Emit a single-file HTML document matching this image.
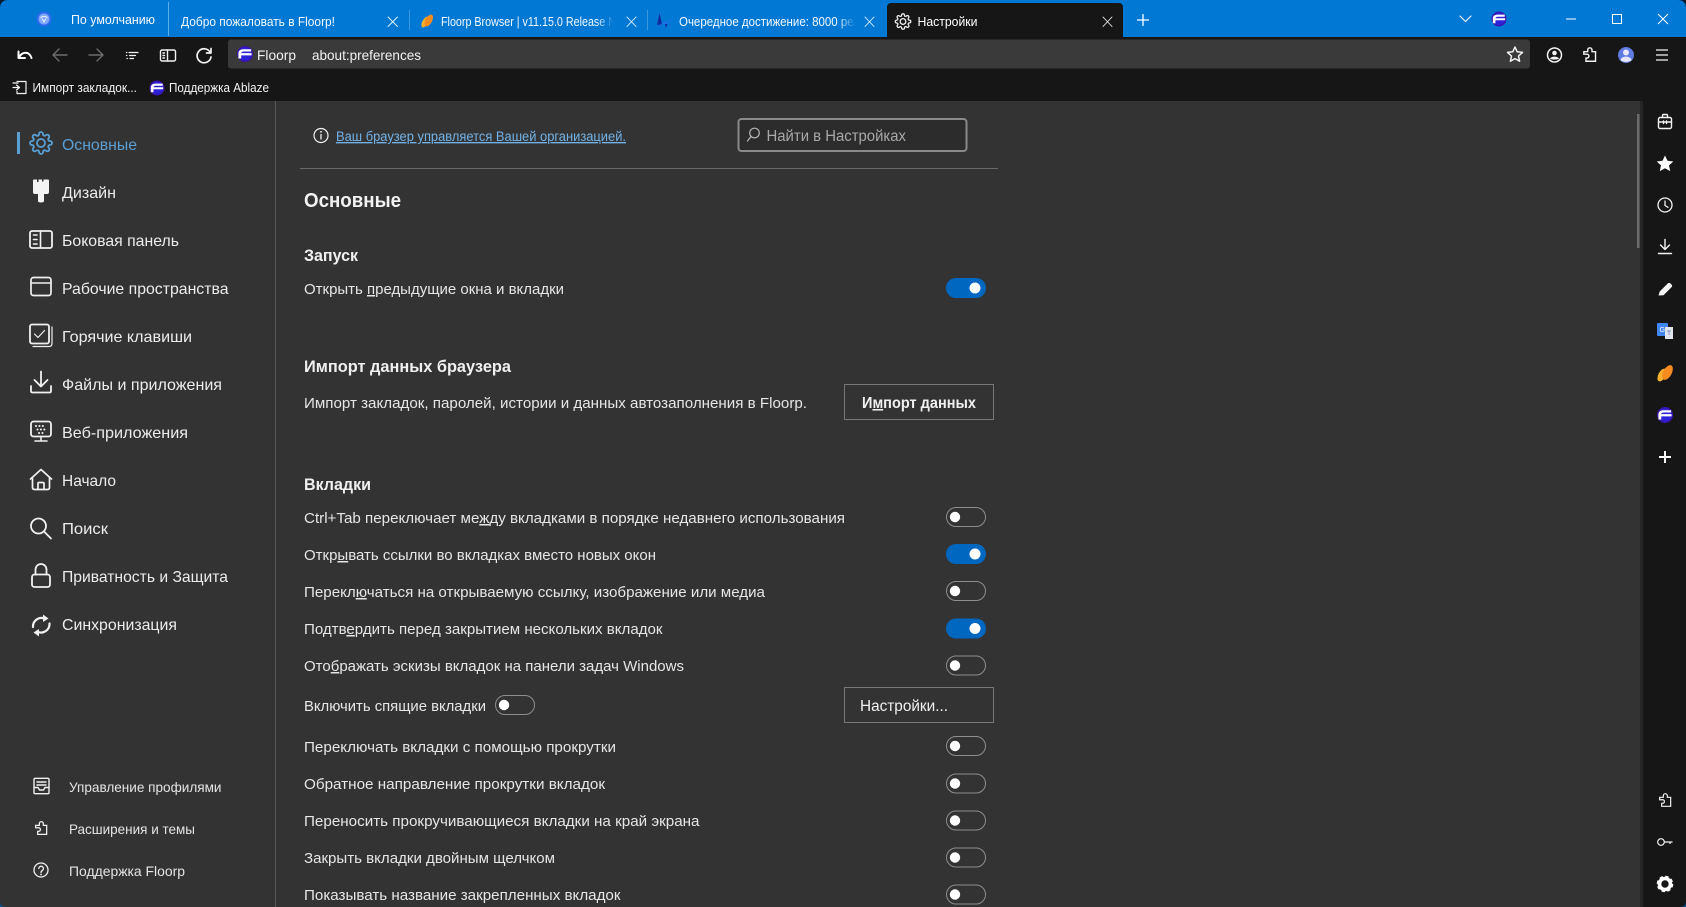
<!DOCTYPE html>
<html lang="ru"><head><meta charset="utf-8"><title>Настройки</title>
<style>
html,body{margin:0;padding:0;background:#333;width:1686px;height:907px;overflow:hidden}
svg{display:block;position:absolute;left:0;top:0}
text{font-family:"Liberation Sans","Noto Sans CJK SC",sans-serif;fill:#ececec;white-space:pre}
.tab{font-size:13px;fill:#f4f9fd}
.nav{font-size:16px;fill:#ececec}
.sm{font-size:14px;fill:#e4e4e4}
.row{font-size:15px;fill:#e6e6e6}
.h2{font-size:17px;font-weight:bold;fill:#f0f0f0}
.bm{font-size:12.5px;fill:#f2f2f2}
.ln{fill:none;stroke:#f2f2f2;stroke-width:1.7;stroke-linecap:round;stroke-linejoin:round}
.ls{fill:none;stroke:#f0f0f0;stroke-width:1.6;stroke-linecap:round;stroke-linejoin:round}
</style></head><body>
<svg width="1686" height="907" viewBox="0 0 1686 907" xmlns="http://www.w3.org/2000/svg">
<defs>
<linearGradient id="fb" x1="0" x2="1" y1="0" y2="0"><stop offset="0" stop-color="#0078d4" stop-opacity="0"/><stop offset=".8" stop-color="#0078d4"/><stop offset="1" stop-color="#0078d4"/></linearGradient>
<symbol id="gear" viewBox="0 0 24 24"><circle cx="12" cy="12" r="4"/><path d="M19.4 15a1.65 1.65 0 0 0 .33 1.82l.06.06a2 2 0 0 1 0 2.83 2 2 0 0 1-2.83 0l-.06-.06a1.65 1.65 0 0 0-1.82-.33 1.65 1.65 0 0 0-1 1.51V21a2 2 0 0 1-2 2 2 2 0 0 1-2-2v-.09A1.65 1.65 0 0 0 9 19.4a1.65 1.65 0 0 0-1.82.33l-.06.06a2 2 0 0 1-2.83 0 2 2 0 0 1 0-2.83l.06-.06a1.65 1.65 0 0 0 .33-1.82 1.65 1.65 0 0 0-1.51-1H3a2 2 0 0 1-2-2 2 2 0 0 1 2-2h.09A1.65 1.65 0 0 0 4.6 9a1.65 1.65 0 0 0-.33-1.82l-.06-.06a2 2 0 0 1 0-2.83 2 2 0 0 1 2.83 0l.06.06a1.65 1.65 0 0 0 1.82.33H9a1.65 1.65 0 0 0 1-1.51V3a2 2 0 0 1 2-2 2 2 0 0 1 2 2v.09a1.65 1.65 0 0 0 1 1.51 1.65 1.65 0 0 0 1.82-.33l.06-.06a2 2 0 0 1 2.83 0 2 2 0 0 1 0 2.83l-.06.06a1.65 1.65 0 0 0-.33 1.82V9a1.65 1.65 0 0 0 1.51 1H21a2 2 0 0 1 2 2 2 2 0 0 1-2 2h-.09a1.65 1.65 0 0 0-1.51 1z"/></symbol>
<symbol id="puzzle" viewBox="0 0 24 24"><path d="M9.500 5.500a3 3 0 0 1 6 0V8H20.500V21.500H7V17H8.500a2.700 2.700 0 0 0 0-5.400H4V8H9.500z"/></symbol>
<symbol id="floorp" viewBox="-8.500 -8.500 17 17"><circle r="8.500" fill="#3a14b0"/><circle r="6.800" fill="#2c22d8"/><path d="M-7-.4C-7-3.900-4.500-5-1.500-5H6.500V-2.600H-1.500C-3-2.600-3.800-2-4-.9H7V1.400H-4V4.800H-7z" fill="#fff"/></symbol>
</defs>

<!-- backgrounds -->
<rect width="1686" height="907" fill="#333"/>
<rect x="0" y="0" width="1686" height="37" fill="#0078d4"/>
<rect x="0" y="37" width="1686" height="64" fill="#161616"/>
<rect x="228" y="39.500" width="1302" height="29" rx="3" fill="#3a3a3a"/>
<rect x="1643" y="101" width="43" height="806" fill="#161616"/>
<rect x="1640" y="101" width="3" height="806" fill="#262626"/>
<rect x="275" y="101" width="1" height="806" fill="#595959"/>
<rect x="1637" y="114" width="2.500" height="134" fill="#6b6b6b"/>
<!-- window corners -->
<path d="M0 0H8C3 0 0 3 0 8z" fill="#0b1a28"/>
<path d="M1686 0H1678C1683 0 1686 3 1686 8z" fill="#0b1a28"/>
<path d="M0 907V901C0 905 2 907 6 907z" fill="#0a4f8c"/>
<path d="M1686 907V901C1686 905 1684 907 1680 907z" fill="#0a4f8c"/>

<!-- tab strip -->
<g transform="translate(44 19)"><circle r="7.500" fill="#2f68ee"/><circle r="5.500" fill="#7fa9f8"/><path d="M-3.500-1.200a5 5 0 0 1 7 0M-2-.500 0 3 2-.500" fill="none" stroke="#e8f0ff" stroke-width="1"/></g>
<text class="tab" x="71" y="24" textLength="84" lengthAdjust="spacingAndGlyphs">По умолчанию</text>
<rect x="168" y="2" width="1" height="34" fill="#5aaee8"/>
<text class="tab" x="181" y="26" textLength="154" lengthAdjust="spacingAndGlyphs">Добро пожаловать в Floorp!</text>
<path class="ln" style="stroke-width:.9;stroke:#e8f3fb" d="M388 17l9.500 9.500M397.500 17l-9.500 9.500"/>
<rect x="409" y="10" width="1" height="20" fill="#3a98e0"/>
<g transform="translate(427 21)"><ellipse cx="-1.800" cy="1" rx="2.800" ry="6" transform="rotate(28 -1.800 1)" fill="#f7b12c"/><ellipse cx="1.800" cy="-.5" rx="3.300" ry="6.500" transform="rotate(28 1.800 -.5)" fill="#f58a1e"/></g>
<text class="tab" x="441" y="26" textLength="175" lengthAdjust="spacingAndGlyphs">Floorp Browser | v11.15.0 Release N</text>
<rect x="597" y="12" width="21" height="20" fill="url(#fb)"/>
<path class="ln" style="stroke-width:.9;stroke:#e8f3fb" d="M627 17l9 9.500M636 17l-9 9.500"/>
<rect x="647" y="10" width="1" height="20" fill="#3a98e0"/>
<g transform="translate(664 20)"><path d="M-7 5-4.500-7-2 4z" fill="#0e2a9c"/><path d="M-3 3.500 9-1 4 3 0 4.500z" fill="#1f6fe8"/><path d="M1 4 2 8 3.500 4z" fill="#0e2a9c"/><path d="M-7 5-3 6-2 4z" fill="#1f5fd8"/></g>
<text class="tab" x="679" y="26" textLength="181" lengthAdjust="spacingAndGlyphs">Очередное достижение: 8000 рел</text>
<rect x="838" y="12" width="22" height="20" fill="url(#fb)"/>
<path class="ln" style="stroke-width:.9;stroke:#e8f3fb" d="M865 17l9 9.500M874 17l-9 9.500"/>
<path d="M887 37V7a4 4 0 0 1 4-4H1119a4 4 0 0 1 4 4V37z" fill="#161616"/>
<use href="#gear" x="894.500" y="13" width="17" height="17" fill="none" stroke="#f2f2f2" stroke-width="1.800"/>
<text class="tab" x="917.500" y="26" textLength="60" lengthAdjust="spacingAndGlyphs" style="fill:#fff">Настройки</text>
<path class="ln" style="stroke-width:.9" d="M1103 17l9 9.500M1112 17l-9 9.500"/>
<path class="ln" style="stroke-width:1.300;stroke:#fff" d="M1143 14.500v11M1137.500 20h11"/>
<path class="ln" style="stroke-width:1.200;stroke:#e8f3fb" d="M1460 16l5.500 5.500 5.500-5.500"/>
<use href="#floorp" x="1491.500" y="11.500" width="15" height="15"/>
<path class="ln" style="stroke-width:1;stroke:#fff;stroke-linecap:butt" d="M1566 19h10"/>
<rect x="1612.500" y="14.500" width="9" height="9" fill="none" stroke="#fff" stroke-width="1"/>
<path class="ln" style="stroke-width:1;stroke:#fff;stroke-linecap:butt" d="M1658 14l10 10M1668 14l-10 10"/>

<!-- toolbar -->
<path class="ln" style="stroke-width:2;stroke:#fff" d="M18.500 51.500v6.500h6.500M19 58c2.500-6.500 10-7.500 12.500 0"/>
<g class="ln" style="stroke:#6d6d6d;stroke-width:1.400"><path d="M67 55H53M59 49l-6 6 6 6"/><path d="M89 55h14M97 49l6 6-6 6"/></g>
<path class="ln" style="stroke-width:1.200" d="M129 52.500h9M129.500 55.500h6M130 58.500h3.500"/>
<path class="ln" style="stroke-width:1.300" d="M126.500 52.500h.3M126.500 55.500h.3M127 58.500h.3"/>
<rect x="160.500" y="50" width="15" height="11" rx="1.500" class="ln" style="stroke-width:1.400"/>
<path class="ln" style="stroke-width:1.400" d="M167.500 50v11M163 53h1.500M163 55.500h1.500M163 58h1.500"/>
<path class="ln" d="M210 52a7 7 0 1 0 1 5M211 48.500v4.500h-4.500"/>
<use href="#floorp" x="237" y="46" width="16" height="16"/>
<text x="257" y="60" font-size="14" textLength="39" lengthAdjust="spacingAndGlyphs" style="fill:#f2f2f2">Floorp</text>
<text x="312" y="60" font-size="14" textLength="109" lengthAdjust="spacingAndGlyphs" style="fill:#f2f2f2">about:preferences</text>
<path class="ln" style="stroke-width:1.500" d="M1515 47l2.200 4.800 5.300.6-4 3.600 1.100 5.200-4.600-2.600-4.600 2.600 1.100-5.200-4-3.600 5.300-.6z"/>
<circle cx="1554.500" cy="55" r="7" class="ln" style="stroke-width:1.500"/><circle cx="1554.500" cy="53" r="2.300" fill="#f2f2f2"/><path d="M1550 58.500c1.500-2.500 7.500-2.500 9 0-1.500 1.500-7.500 1.500-9 0z" fill="#f2f2f2"/>
<use href="#puzzle" x="1581" y="46" width="17" height="17" fill="none" stroke="#f2f2f2" stroke-width="2"/>
<circle cx="1626" cy="55" r="8" fill="#5f7be0"/><circle cx="1626" cy="52.500" r="3" fill="#e8e6ff"/><path d="M1620.500 60c1-4.500 10-4.500 11 0-2 2.500-9 2.500-11 0z" fill="#e8e6ff"/>
<path class="ln" style="stroke-width:1.300;stroke-linecap:butt" d="M1656 50h12M1656 55h12M1656 60h12"/>

<!-- bookmarks -->
<path class="ln" style="stroke-width:1.200" d="M18 83h-5M19 87.500h-6M16.500 85l3 2.500-3 2.500"/>
<path class="ln" style="stroke-width:1.200" d="M17 81.500h9v12h-9v-2"/>
<text class="bm" x="32.500" y="92" textLength="104.500" lengthAdjust="spacingAndGlyphs">Импорт закладок...</text>
<use href="#floorp" x="149.500" y="80.500" width="15" height="15"/>
<text class="bm" x="169" y="92" textLength="100" lengthAdjust="spacingAndGlyphs">Поддержка Ablaze</text>

<!-- left nav -->
<rect x="17" y="132" width="3" height="22" fill="#5a9fd4"/>
<use href="#gear" x="29" y="130.500" width="24" height="25" fill="none" stroke="#5a9fd4" stroke-width="1.800"/>
<text class="nav" x="62" y="150" textLength="75" lengthAdjust="spacingAndGlyphs" style="fill:#5a9fd4">Основные</text>

<path d="M34 179.500h3v2.500h1.500v-2.500h3.500v2h1.500v-2H48q1 0 1 1v11.500q0 2-2 2h-3v7q0 1.500-3 1.500t-3-1.500v-7h-3q-2 0-2-2V180.500q0-1 1-1z" fill="#f4f4f4"/>
<text class="nav" x="62" y="198" textLength="54" lengthAdjust="spacingAndGlyphs">Дизайн</text>

<rect x="30" y="231" width="22" height="17" rx="2" class="ls" style="stroke-width:1.800"/><path class="ls" d="M40.500 231v17M33.500 235h3.500M33.500 239.500h3.500M33.500 244h3.500"/>
<text class="nav" x="62" y="246" textLength="117" lengthAdjust="spacingAndGlyphs">Боковая панель</text>

<rect x="31" y="277.500" width="20" height="18" rx="2.500" class="ls" style="stroke-width:1.700"/><path class="ls" d="M31 283h20"/>
<text class="nav" x="62" y="294" textLength="166.500" lengthAdjust="spacingAndGlyphs">Рабочие пространства</text>

<rect x="30" y="324.500" width="19" height="19" rx="2" class="ls" style="stroke-width:1.800"/><path class="ls" d="M34.500 334l3.500 3.500 6.500-7M33 346.500h16q3 0 3-3V327" style="stroke-width:1.200"/>
<text class="nav" x="62" y="342" textLength="130" lengthAdjust="spacingAndGlyphs">Горячие клавиши</text>

<path class="ls" style="stroke-width:1.800" d="M41 371.500v15M34.500 380l6.500 6.500 6.500-6.500M31 386v5q0 1.500 1.500 1.500h17q1.500 0 1.500-1.500v-5"/>
<text class="nav" x="62" y="390" textLength="160" lengthAdjust="spacingAndGlyphs">Файлы и приложения</text>

<rect x="31" y="421.500" width="20" height="15" rx="2.500" class="ls" style="stroke-width:1.800"/><path class="ls" d="M41 436.500v4M35 441h12"/><path class="ls" style="stroke-width:2;stroke-dasharray:.1 3.300" d="M36 426h10M37.500 429.500h7M39 433h4"/>
<text class="nav" x="62" y="438" textLength="126" lengthAdjust="spacingAndGlyphs">Веб-приложения</text>

<path class="ls" style="stroke-width:1.700" d="M30.500 479l10.500-9.500 10.500 9.500M32.500 477.500v10q0 2 2 2h13q2 0 2-2v-10M38 489.500v-6q0-1 1-1h4q1 0 1 1v6"/>
<text class="nav" x="62" y="486" textLength="54" lengthAdjust="spacingAndGlyphs">Начало</text>

<circle cx="38.500" cy="526" r="7.500" class="ls" style="stroke-width:1.800"/><path class="ls" style="stroke-width:1.800" d="M44 531.500l7 7"/>
<text class="nav" x="62" y="534" textLength="46" lengthAdjust="spacingAndGlyphs">Поиск</text>

<rect x="32" y="574.500" width="18" height="12.500" rx="2.500" class="ls" style="stroke-width:1.800"/><path class="ls" style="stroke-width:1.800" d="M35.500 574.500v-5a5.500 5.500 0 0 1 11 0v5"/>
<text class="nav" x="62" y="582" textLength="166" lengthAdjust="spacingAndGlyphs">Приватность и Защита</text>

<path class="ls" style="stroke-width:2.200" d="M33 627a8.500 8.500 0 0 1 12.500-8M49.500 623.500a8.500 8.500 0 0 1-12.500 8"/><path d="M43 614.500l5.500 4-5.500 3.500zM39 636.500l-5.500-4 5.500-3.500z" fill="#f0f0f0"/>
<text class="nav" x="62" y="630" textLength="115" lengthAdjust="spacingAndGlyphs">Синхронизация</text>

<path class="ls" style="stroke-width:1.400" d="M34 779.500q0-1.200 1.200-1.200h12.600q1.200 0 1.200 1.200v13q0 1.200-1.200 1.200H35.200q-1.200 0-1.200-1.200zM37 782h9M37 785h9M34 787.500h4l1.500 2.500h4l1.500-2.500h4"/>
<text class="sm" x="69" y="792" textLength="152.500" lengthAdjust="spacingAndGlyphs">Управление профилями</text>
<use href="#puzzle" x="33" y="820" width="16" height="16" fill="none" stroke="#f0f0f0" stroke-width="1.900"/>
<text class="sm" x="69" y="834" textLength="126" lengthAdjust="spacingAndGlyphs">Расширения и темы</text>
<circle cx="41" cy="870" r="7" class="ls" style="stroke-width:1.300"/><path class="ls" style="stroke-width:1.300" d="M38.800 868.500a2.300 2.300 0 1 1 3.500 2c-.9.500-1.300 1-1.300 2"/><circle cx="41" cy="874.500" r=".9" fill="#f0f0f0"/>
<text class="sm" x="69" y="876" textLength="116" lengthAdjust="spacingAndGlyphs">Поддержка Floorp</text>

<!-- header -->
<circle cx="321" cy="135.500" r="7" class="ls" style="stroke-width:1.200"/><path class="ls" style="stroke-width:1.300" d="M321 134.500v4.500"/><circle cx="321" cy="131.800" r=".9" fill="#f0f0f0"/>
<text x="336" y="141" font-size="13.500" textLength="290" lengthAdjust="spacingAndGlyphs" style="fill:#72b2e8" text-decoration="underline">Ваш браузер управляется Вашей организацией.</text>
<rect x="738.500" y="119" width="228" height="32" rx="3" fill="#2c2c2c" stroke="#8a8a8a" stroke-width="2"/>
<circle cx="754.500" cy="133" r="4.800" class="ls" style="stroke-width:1.200;stroke:#b5b5b5"/><path class="ls" style="stroke-width:1.300;stroke:#b5b5b5" d="M751 136.500l-3.500 4.500"/>
<text x="766.500" y="141" font-size="15.500" textLength="139.500" lengthAdjust="spacingAndGlyphs" style="fill:#a8a8a8">Найти в Настройках</text>
<rect x="300" y="168" width="698" height="1" fill="#6a6a6a"/>

<text x="304" y="207" font-size="20" font-weight="bold" textLength="97" lengthAdjust="spacingAndGlyphs" style="fill:#f2f2f2">Основные</text>
<text class="h2" x="304" y="261" textLength="54" lengthAdjust="spacingAndGlyphs">Запуск</text>
<text class="row" x="304" y="294" textLength="260" lengthAdjust="spacingAndGlyphs">Открыть <tspan text-decoration="underline">п</tspan>редыдущие окна и вкладки</text>
<rect x="946" y="278" width="40" height="20" rx="10" fill="#0067c0"/><circle cx="975" cy="288" r="5.500" fill="#fff"/>

<text class="h2" x="304" y="372" textLength="207" lengthAdjust="spacingAndGlyphs">Импорт данных браузера</text>
<text class="row" x="304" y="408" textLength="503" lengthAdjust="spacingAndGlyphs">Импорт закладок, паролей, истории и данных автозаполнения в Floorp.</text>
<rect x="844.500" y="384.500" width="149" height="35" fill="#333" stroke="#777" stroke-width="1"/>
<text x="862" y="408" font-size="15.500" font-weight="bold" textLength="114" lengthAdjust="spacingAndGlyphs" style="fill:#f0f0f0">И<tspan text-decoration="underline">м</tspan>порт данных</text>

<text class="h2" x="304" y="490" textLength="67" lengthAdjust="spacingAndGlyphs">Вкладки</text>

<text class="row" x="304" y="523" textLength="541" lengthAdjust="spacingAndGlyphs">Ctrl+Tab переключает ме<tspan text-decoration="underline">ж</tspan>ду вкладками в порядке недавнего использования</text>
<text class="row" x="304" y="560" textLength="352" lengthAdjust="spacingAndGlyphs">Откр<tspan text-decoration="underline">ы</tspan>вать ссылки во вкладках вместо новых окон</text>
<text class="row" x="304" y="597" textLength="461" lengthAdjust="spacingAndGlyphs">Перекл<tspan text-decoration="underline">ю</tspan>чаться на открываемую ссылку, изображение или медиа</text>
<text class="row" x="304" y="634" textLength="358.500" lengthAdjust="spacingAndGlyphs">Подтв<tspan text-decoration="underline">е</tspan>рдить перед закрытием нескольких вкладок</text>
<text class="row" x="304" y="671" textLength="380" lengthAdjust="spacingAndGlyphs">Ото<tspan text-decoration="underline">б</tspan>ражать эскизы вкладок на панели задач Windows</text>
<text class="row" x="304" y="711" textLength="182" lengthAdjust="spacingAndGlyphs">Включить спящие вкладки</text>
<text class="row" x="304" y="752" textLength="312" lengthAdjust="spacingAndGlyphs">Переключать вкладки с помощью прокрутки</text>
<text class="row" x="304" y="789" textLength="301" lengthAdjust="spacingAndGlyphs">Обратное направление прокрутки вкладок</text>
<text class="row" x="304" y="826" textLength="395.500" lengthAdjust="spacingAndGlyphs">Переносить прокручивающиеся вкладки на край экрана</text>
<text class="row" x="304" y="863" textLength="251" lengthAdjust="spacingAndGlyphs">Закрыть вкладки двойным щелчком</text>
<text class="row" x="304" y="900" textLength="316.500" lengthAdjust="spacingAndGlyphs">Показывать название закрепленных вкладок</text>

<g fill="none" stroke="#8e8e8e" stroke-width="1">
<rect x="946.500" y="507.500" width="39" height="19" rx="9.500"/>
<rect x="946.500" y="581.500" width="39" height="19" rx="9.500"/>
<rect x="946.500" y="656" width="39" height="19" rx="9.500"/>
<rect x="495.500" y="695.500" width="39" height="19" rx="9.500"/>
<rect x="946.500" y="736.500" width="39" height="19" rx="9.500"/>
<rect x="946.500" y="774" width="39" height="19" rx="9.500"/>
<rect x="946.500" y="811" width="39" height="19" rx="9.500"/>
<rect x="946.500" y="848" width="39" height="19" rx="9.500"/>
<rect x="946.500" y="885" width="39" height="19" rx="9.500"/>
</g>
<g fill="#fff">
<circle cx="955" cy="517" r="5.200"/>
<circle cx="955" cy="591" r="5.200"/>
<circle cx="955" cy="665.500" r="5.200"/>
<circle cx="504" cy="705" r="5.200"/>
<circle cx="955" cy="746" r="5.200"/>
<circle cx="955" cy="783.500" r="5.200"/>
<circle cx="955" cy="820.500" r="5.200"/>
<circle cx="955" cy="857.500" r="5.200"/>
<circle cx="955" cy="894.500" r="5.200"/>
</g>
<rect x="946" y="544" width="40" height="20" rx="10" fill="#0067c0"/><circle cx="975" cy="554" r="5.500" fill="#fff"/>
<rect x="946" y="618.500" width="40" height="20" rx="10" fill="#0067c0"/><circle cx="975" cy="628.500" r="5.500" fill="#fff"/>
<rect x="844.500" y="687.500" width="149" height="35" fill="#333" stroke="#777" stroke-width="1"/>
<text x="860" y="711" font-size="15.500" textLength="88" lengthAdjust="spacingAndGlyphs" style="fill:#f0f0f0">Настройки...</text>

<!-- right sidebar -->
<g class="ln" style="stroke-width:1.400" transform="translate(0 2)"><rect x="1658.500" y="115.500" width="13" height="11" rx="1.500"/><path d="M1662.500 115.500v-2q0-1 1-1h3q1 0 1 1v2M1658.500 120h13M1663.500 119v2.500M1666.500 119v2.500"/></g>
<path d="M1665 155.500l2.500 5.300 5.800.7-4.300 3.900 1.200 5.700-5.200-2.900-5.200 2.900 1.200-5.700-4.300-3.900 5.800-.7z" fill="#fff"/>
<circle cx="1665" cy="205" r="7" class="ln" style="stroke-width:1.300"/><path class="ln" style="stroke-width:1.300" d="M1665 201v4.500l3 1.800"/>
<path class="ln" style="stroke-width:1.400" d="M1665 239.500v10M1660.500 245l4.500 4.500 4.500-4.500M1658.500 253.500h13"/>
<path d="M1658.500 295.500l1.200-4 8-8q1.300-1.300 2.800 0l1 1q1.300 1.500 0 2.800l-8 8z" fill="#f4f4f4"/>
<rect x="1657" y="323" width="11" height="13" rx="1" fill="#4285f4"/><rect x="1665" y="327" width="8" height="12" fill="#e2e5ee"/><path d="M1667 331h4M1669 330v5" stroke="#8a9ac8" stroke-width="1"/><text x="1659.500" y="332" font-size="7" style="fill:#fff">G</text>
<g transform="translate(1665 373)"><ellipse cx="-3" cy="2" rx="3.600" ry="7" transform="rotate(28 -3 2)" fill="#f7b12c"/><ellipse cx="2.500" cy="-.5" rx="4.300" ry="8" transform="rotate(28 2.500 -.5)" fill="#f58a1e"/></g>
<use href="#floorp" x="1657" y="407" width="16" height="16"/>
<path class="ln" style="stroke-width:1.900;stroke:#fff;stroke-linecap:butt" d="M1665 451v12M1659 457h12"/>
<use href="#puzzle" x="1657" y="791" width="16" height="18" fill="none" stroke="#f2f2f2" stroke-width="1.800"/>
<circle cx="1661" cy="842" r="3.300" class="ln" style="stroke-width:1.200"/><path class="ln" style="stroke-width:1.200;stroke-linecap:butt" d="M1664.500 842h8M1670 842v2"/>
<circle cx="1665" cy="884" r="5.500" fill="none" stroke="#fff" stroke-width="3.600"/>
<circle cx="1665" cy="884" r="7" fill="none" stroke="#fff" stroke-width="2.600" stroke-dasharray="3.200 2.300"/>
</svg>
</body></html>
